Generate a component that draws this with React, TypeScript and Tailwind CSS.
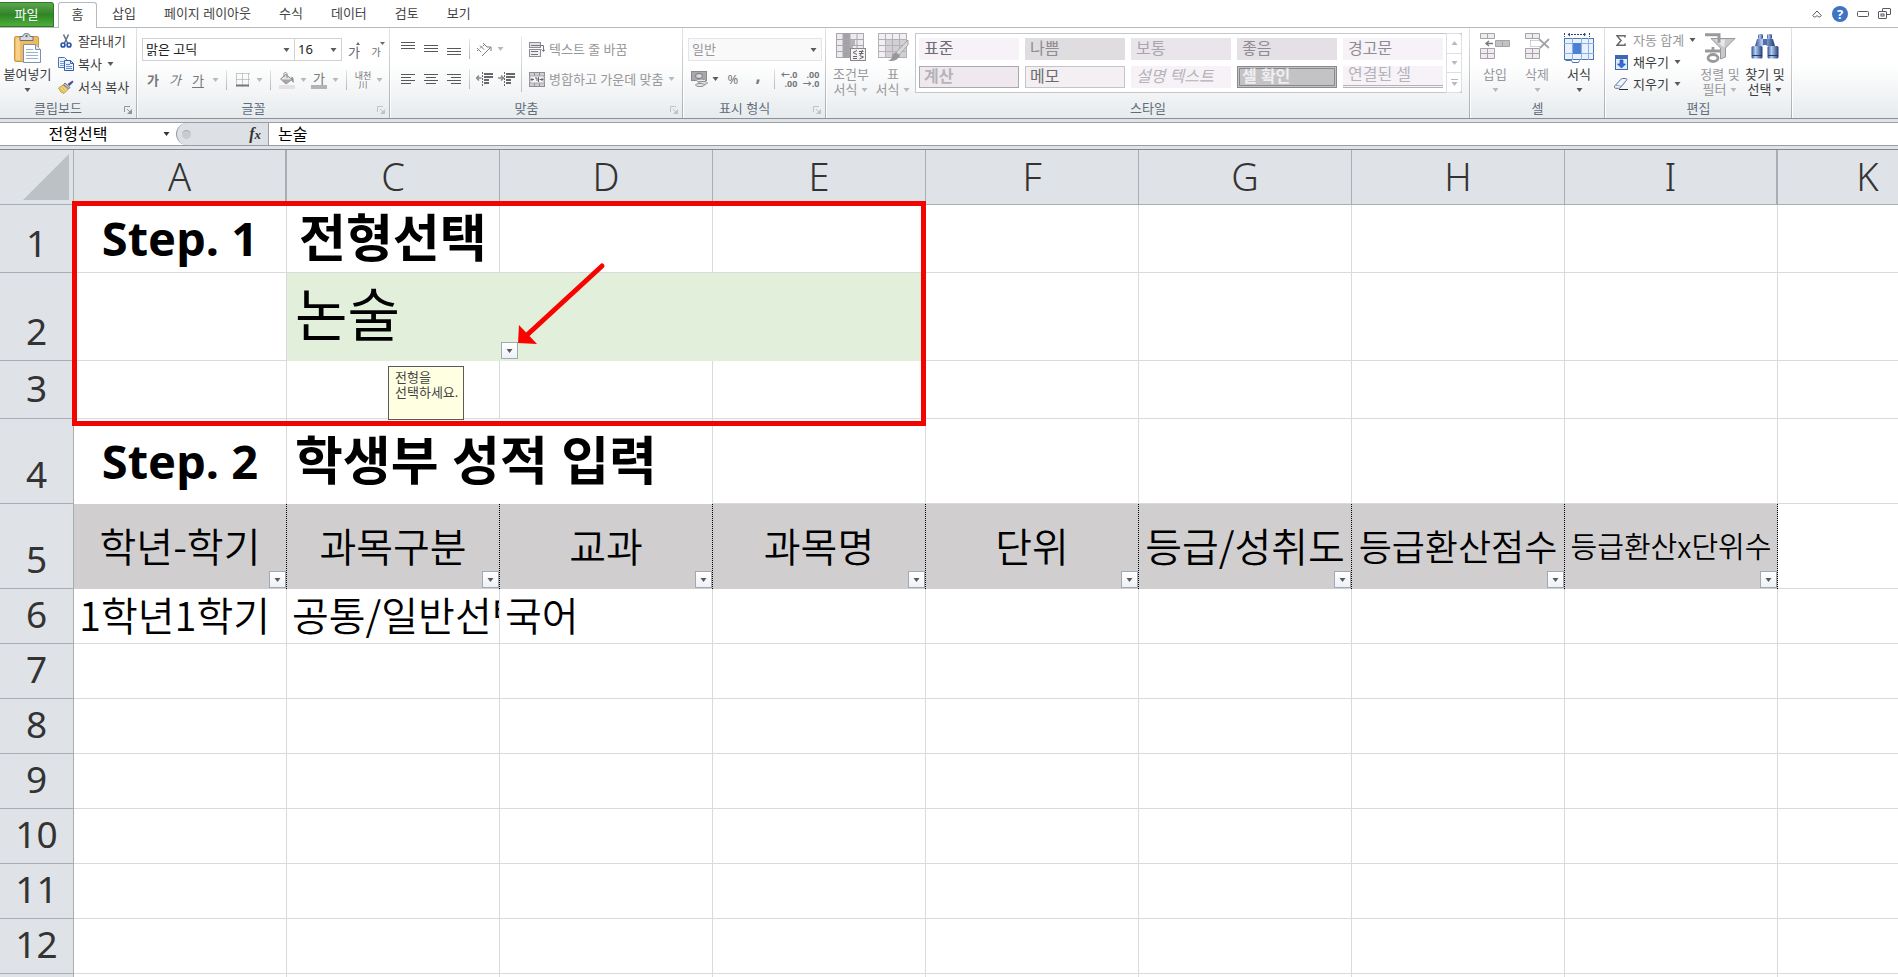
import React from "react";

type Kids = { children?: React.ReactNode };

/* ---------- small shared parts ---------- */

function Caret({ className = "text-[#5a5a5a]" }: { className?: string }) {
  return (
    <svg width="7" height="4" viewBox="0 0 7 4" className={`shrink-0 ${className}`} aria-hidden="true">
      <path d="M0.500 0h6L3.500 4z" fill="currentColor" />
    </svg>
  );
}

const pale = "text-[#b9b9bd]";

function CaretSlot({ dark = false }: { dark?: boolean }) {
  return (
    <span className="flex w-[10px] shrink-0 justify-center">
      <Caret className={dark ? "text-[#5a5a5a]" : pale} />
    </span>
  );
}

function Sep({ className = "w-3" }: { className?: string }) {
  return (
    <span className={`flex shrink-0 justify-center ${className}`}>
      <span className="h-5 w-px bg-linear-to-b from-[#e6e6e8] to-[#b4b6ba]" />
    </span>
  );
}

function Tool({ label, className = "w-[22px]", children }: Kids & { label: string; className?: string }) {
  return (
    <button type="button" aria-label={label} className={`flex h-[22px] shrink-0 items-center justify-center ${className}`}>
      {children}
    </button>
  );
}

function Launcher({ faint = false }: { faint?: boolean }) {
  return (
    <svg width="8" height="8" viewBox="0 0 8 8" className={faint ? "text-[#bfc3c8]" : "text-[#8e949b]"} aria-hidden="true">
      <path d="M0.500 6V0.500H6" fill="none" stroke="currentColor" />
      <path d="M3 3l3 3" stroke="currentColor" />
      <path d="M8 3v5H3z" fill="currentColor" />
    </svg>
  );
}

function Group({
  title,
  className,
  launcher,
  children,
}: Kids & { title: string; className: string; launcher?: "dark" | "faint" }) {
  return (
    <section aria-label={title} className={`flex h-[90px] shrink-0 ${className}`}>
      <div className="flex min-w-0 flex-1 flex-col">
        <div className="flex h-[70px] items-start">{children}</div>
        <div className="flex h-5 items-center">
          <span className="flex-1 text-center text-[13px] leading-5 text-[#626d7b]">{title}</span>
          {launcher && (
            <span className="w-5 pt-1 pl-2">
              <Launcher faint={launcher === "faint"} />
            </span>
          )}
        </div>
      </div>
      <span className="w-px bg-linear-to-b from-[#e2e4e6] via-[#c3c6ca] to-[#a9adb2]" />
      <span className="w-px bg-white" />
    </section>
  );
}

function BigButton({
  icon,
  lines,
  active = false,
  inlineCaret = false,
  className = "w-[42px]",
}: {
  icon: React.ReactNode;
  lines: string[];
  active?: boolean;
  inlineCaret?: boolean;
  className?: string;
}) {
  const last = lines.length - 1;
  return (
    <button
      type="button"
      className={`flex shrink-0 flex-col items-center pt-1 text-[13px] leading-[15px] ${className} ${
        active ? "text-[#3c3c3c]" : "text-[#98989c]"
      }`}
    >
      <span className="flex h-[35px] items-start justify-center pt-px">{icon}</span>
      {lines.map((line, i) => (
        <span key={line} className="flex items-center gap-1 whitespace-nowrap">
          {line}
          {inlineCaret && i === last && <Caret className={active ? "text-[#5a5a5a]" : pale} />}
        </span>
      ))}
      {!inlineCaret && (
        <span className="flex h-[15px] items-center">
          <Caret className={active ? "text-[#5a5a5a]" : pale} />
        </span>
      )}
    </button>
  );
}

function RowButton({
  icon,
  label,
  caret = false,
  muted = false,
  className = "h-[23px]",
}: {
  icon: React.ReactNode;
  label: string;
  caret?: boolean;
  muted?: boolean;
  className?: string;
}) {
  return (
    <button
      type="button"
      className={`flex items-center whitespace-nowrap text-[13px] leading-5 ${className} ${
        muted ? "text-[#98989c]" : "text-[#3c3c3c]"
      }`}
    >
      <span className="mr-1 flex w-4 justify-center">{icon}</span>
      {label}
      {caret && <Caret className="ml-[5px] text-[#5a5a5a]" />}
    </button>
  );
}

/* ---------- icons ---------- */

function PasteIcon() {
  return (
    <svg width="28" height="31" viewBox="0 0 28 31" aria-hidden="true">
      <rect x="0.500" y="3.500" width="24" height="25" rx="1.500" fill="#eebb62" stroke="#c99845" />
      <rect x="2" y="5" width="4" height="22" fill="#f6d08c" />
      <path d="M6 3.500h3c0-2 1.500-3 3.500-3s3.500 1 3.500 3h3v4H6z" fill="#d7dade" stroke="#6c737b" />
      <circle cx="12.500" cy="3" r="1.200" fill="#6c737b" />
      <path d="M9.500 11.500h12l5 5v13h-17z" fill="#fbfdff" stroke="#7f8fa6" />
      <path d="M21.500 11.500v5h5" fill="#dfe8f3" stroke="#7f8fa6" />
      <path d="M12 16.500h7M12 19.500h12M12 22.500h12M12 25.500h12" stroke="#9db0c8" />
    </svg>
  );
}

function CutIcon() {
  return (
    <svg width="12" height="14" viewBox="0 0 12 14" aria-hidden="true">
      <path d="M3.500 0.500l4 8.500M8.500 0.500l-4 8.500" stroke="#5d6f8a" strokeWidth="1.500" fill="none" />
      <ellipse cx="3" cy="11" rx="1.900" ry="2" fill="none" stroke="#2a55ad" strokeWidth="1.700" />
      <ellipse cx="9" cy="11" rx="1.900" ry="2" fill="none" stroke="#2a55ad" strokeWidth="1.700" />
    </svg>
  );
}

function CopyIcon() {
  return (
    <svg width="16" height="14" viewBox="0 0 16 14" aria-hidden="true">
      <path d="M0.500 0.500h6l3 3v7h-9z" fill="#eaf2fd" stroke="#4d74b5" />
      <path d="M2 4.500h4M2 6.500h5M2 8.500h5" stroke="#7fa0d6" />
      <path d="M6.500 3.500h6l3 3v7h-9z" fill="#eaf2fd" stroke="#365fa8" />
      <path d="M12.500 3.500v3h3" fill="none" stroke="#365fa8" />
      <path d="M8 7.500h4M8 9.500h6M8 11.500h6" stroke="#6b90cd" />
    </svg>
  );
}

function BrushIcon() {
  return (
    <svg width="16" height="14" viewBox="0 0 16 14" aria-hidden="true">
      <path d="M14.500 0.500l1 1.500-4 4-2-2z" fill="#4b4f8e" />
      <path d="M7 3l5 4.500-1.500 1.500L5.500 4.500z" fill="#b9bdc6" stroke="#5b5f70" strokeWidth="0.800" />
      <path d="M5 5l5 4.500-4 4L3 12 0.500 8z" fill="#f4d775" stroke="#a8893a" strokeWidth="0.800" />
      <path d="M2 8.500l4 4M4 7l3 4" stroke="#c9a748" strokeWidth="0.800" />
    </svg>
  );
}

function BorderIcon() {
  return (
    <svg width="14" height="14" viewBox="0 0 14 14" aria-hidden="true">
      <path
        d="M0.500 0.500h13M0.500 6.500h13M0.500 0.500v13M6.500 0.500v13M12.500 0.500v13"
        stroke="#9b9b9f"
        strokeDasharray="1 1"
        fill="none"
      />
      <path d="M0 12.500h13" stroke="#77777b" strokeWidth="2" />
    </svg>
  );
}

function FillIcon() {
  return (
    <svg width="16" height="17" viewBox="0 0 16 17" aria-hidden="true">
      <path d="M7 2.500l6 5-6 4.500-5.500-5z" fill="#e6e4e8" stroke="#8c8b90" />
      <path d="M5 5V2c0-2 3-2 3 0v4" fill="none" stroke="#8c8b90" />
      <path d="M2 7.500h10.500L7 11.500z" fill="#a5a4a9" />
      <path d="M12.500 4.500c2 .5 2.500 3 2 6.500-1.500-1-2.500-3-2-6.500z" fill="#8c8b90" />
      <rect y="13" width="16" height="4" fill="#e6dfe3" />
    </svg>
  );
}

function Lines({ widths, x = "left" }: { widths: number[]; x?: "left" | "center" | "right" }) {
  return (
    <svg
      width="14"
      height={widths.length * 3 - 1}
      viewBox={`0 0 14 ${widths.length * 3 - 1}`}
      shapeRendering="crispEdges"
      aria-hidden="true"
    >
      {widths.map((w, i) => (
        <rect
          key={i}
          x={x === "left" ? 0 : x === "center" ? (14 - w) / 2 : 14 - w}
          y={i * 3}
          width={w}
          height="1"
          fill="#58585c"
        />
      ))}
    </svg>
  );
}

function OrientationIcon() {
  return (
    <svg width="16" height="15" viewBox="0 0 16 15" aria-hidden="true" fill="none" stroke="#7c7c80">
      <path d="M1 6l4 4M1 9l2-2M4 3.500l4 4M4 6.500l2-2M7 1l4 4M7 4l2-2" />
      <path d="M6 14l8.500-8.500M11 5h4v4" />
    </svg>
  );
}

function IndentIcon({ inward }: { inward?: boolean }) {
  return (
    <svg width="17" height="14" viewBox="0 0 17 14" aria-hidden="true">
      <path d="M8 2h9M8 5h9M8 8h5M8 11h5" stroke="#68686c" strokeWidth="2" />
      <path d="M6.500 0v14" stroke="#68686c" strokeDasharray="2 1" />
      <path
        d={inward ? "M0 6h5M3 3.500L5.500 6 3 8.500" : "M0.500 6h5M3 3.500L0.500 6 3 8.500"}
        stroke="#8a8a8e"
        fill="none"
        strokeWidth="1.500"
      />
    </svg>
  );
}

function WrapIcon() {
  return (
    <svg width="16" height="15" viewBox="0 0 16 15" aria-hidden="true">
      <rect x="0.500" y="0.500" width="11" height="5" fill="#e4e0e6" stroke="#8f8e94" />
      <rect x="0.500" y="7.500" width="11" height="7" fill="#f1eef3" stroke="#8f8e94" />
      <path d="M2 3.500h9M2 9.500h7M2 12.500h7" stroke="#77767b" />
      <path d="M11 3.500h3.500V9M12.500 7.500l2 2 1.500-2" fill="none" stroke="#77767b" />
    </svg>
  );
}

function MergeIcon() {
  return (
    <svg width="16" height="15" viewBox="0 0 16 15" aria-hidden="true">
      <rect x="0.500" y="0.500" width="15" height="14" fill="#d0cdd2" stroke="#8f8e94" />
      <path d="M5.500 0v4M10.500 0v4M5.500 11v4M10.500 11v4" stroke="#8f8e94" />
      <rect x="1" y="4" width="14" height="7" fill="#f6f4f7" stroke="#a9a8ad" />
      <path
        d="M2 7.500h3M11 7.500h3M3.500 6L2 7.500 3.500 9M12.500 6L14 7.500 12.500 9M6 6h2v3M9.500 5v5M9.500 7.500h1"
        fill="none"
        stroke="#66656a"
      />
    </svg>
  );
}

function MoneyIcon() {
  return (
    <svg width="17" height="16" viewBox="0 0 17 16" aria-hidden="true">
      <rect x="0.500" y="0.500" width="15" height="9" fill="#a9a7ab" stroke="#8b898d" />
      <ellipse cx="8" cy="5" rx="3.500" ry="2.500" fill="#d9d7db" stroke="#77767a" />
      <ellipse cx="10" cy="9.500" rx="4.500" ry="1.500" fill="#ecebee" stroke="#8b898d" />
      <ellipse cx="12" cy="12" rx="4.500" ry="1.500" fill="#ecebee" stroke="#8b898d" />
      <ellipse cx="9" cy="14" rx="4.500" ry="1.500" fill="#ecebee" stroke="#8b898d" />
    </svg>
  );
}

function CondFormatIcon() {
  return (
    <svg width="30" height="29" viewBox="0 0 30 29" aria-hidden="true">
      <rect x="0.500" y="0.500" width="27" height="24" fill="#efe9f0" stroke="#a9a8ac" />
      <rect x="7" y="0" width="7" height="25" fill="#a3a2a6" />
      <path d="M14 7h5v5h-5zM14 13h3v5h-3z" fill="#b5b3b8" />
      <path d="M0 6.500h28M0 12.500h28M0 18.500h28M7 0v25M14 0v25M21 0v25" stroke="#a9a8ac" fill="none" />
      <rect x="14.500" y="15.500" width="15" height="12" fill="#f4f2f5" stroke="#88878b" />
      <path
        d="M21 17.500l-4 2 4 2M17 23.500h4M17 25.500h4M23 18.500h4.500M23 20.500h4.500M26.500 17l-2 5M23.500 22.500l4 1.500-4 2"
        stroke="#66656a"
        fill="none"
      />
    </svg>
  );
}

function TableFormatIcon() {
  return (
    <svg width="31" height="29" viewBox="0 0 31 29" aria-hidden="true">
      <rect x="0.500" y="0.500" width="28" height="24" fill="#f3eef4" stroke="#b3b1b6" />
      <rect x="7" y="6" width="21" height="18" fill="#d2d0d4" />
      <path d="M0 6.500h29M0 12.500h29M0 18.500h29M7.500 0v25M14.500 0v25M21.500 0v25" stroke="#b3b1b6" fill="none" />
      <path d="M30 7v5l-9 10-3-2.500z" fill="#d9d8db" stroke="#98979b" strokeWidth="0.800" />
      <path d="M18 19.500l3.500 3c-1 4-5 6-11.500 5.500 3-1 4-3 4.500-5.500 .5-2 2-3 3.500-3z" fill="#98979b" />
    </svg>
  );
}

function InsertIcon() {
  return (
    <svg width="31" height="27" viewBox="0 0 31 27" aria-hidden="true">
      <path
        d="M0.500 0.500h14v5H0.500zM7.500 0.500v5M0.500 15.500h14v10H0.500zM7.500 15.500v10M0.500 20.500h14"
        fill="#f1ebf1"
        stroke="#a5a4a8"
      />
      <path d="M15.500 7.500h14v6h-14z" fill="#c2c1c4" stroke="#a5a4a8" />
      <path d="M22.500 7.500v6" stroke="#a5a4a8" />
      <path d="M6 10.500h7M9 8l-3 2.500L9 13" stroke="#77767a" fill="none" strokeWidth="1.400" />
    </svg>
  );
}

function DeleteIcon() {
  return (
    <svg width="31" height="27" viewBox="0 0 31 27" aria-hidden="true">
      <path
        d="M3.500 0.500h14v5h-14zM10.500 0.500v5M3.500 15.500h14v10h-14zM10.500 15.500v10M3.500 20.500h14"
        fill="#f1ebf1"
        stroke="#a5a4a8"
      />
      <path d="M8.500 7.500h10M8.500 13.500h10M8.500 7.500v6" stroke="#a5a4a8" strokeDasharray="1 1" fill="none" />
      <path d="M17 6l10 9M27 6l-9 9" stroke="#a5a4a8" strokeWidth="1.800" />
    </svg>
  );
}

function FormatIcon() {
  return (
    <svg width="31" height="30" viewBox="0 0 31 30" aria-hidden="true">
      <path
        d="M0.500 0v4M25.500 0v4M4 1.500h18M6 0L4 1.500 6 3M20 0l2 1.500L20 3"
        stroke="#23426f"
        fill="none"
        strokeDasharray="2 1"
      />
      <rect x="0.500" y="5.500" width="29" height="21" fill="#e9f1fc" stroke="#4c76b5" />
      <path d="M0 10.500h30M0 20.500h30M8.500 5v22M17.500 5v22M24.500 5v22" stroke="#8fafdd" fill="none" />
      <rect x="9" y="10" width="8" height="11" fill="#4f80d8" />
      <path d="M1.500 27.500h6l1 2h6l1-2" stroke="#4c76b5" fill="none" />
    </svg>
  );
}

function FillDownIcon() {
  return (
    <svg width="13" height="15" viewBox="0 0 13 15" aria-hidden="true">
      <rect x="0.500" y="0.500" width="12" height="14" fill="#dfeafb" stroke="#3f68b4" />
      <rect x="1" y="1" width="11" height="3" fill="#3f68b4" />
      <path d="M5 5h3v4h2.500L6.500 13 2.500 9H5z" fill="#2f6fe0" stroke="#1b4ba5" strokeWidth="0.700" />
    </svg>
  );
}

function EraserIcon() {
  return (
    <svg width="15" height="12" viewBox="0 0 15 12" aria-hidden="true">
      <path
        d="M0.700 8l6-6.500c.6-.7 1.300-1 2-1h3c1 0 1.500 1 .8 1.800L6.500 9.500c-.5.500-1 .8-1.800.8H1.800C.7 10.300 0 9 .7 8z"
        fill="#f2f6fc"
        stroke="#5a6c8c"
      />
      <path d="M1 7.500h4.500l1 1.500 5-6" stroke="#8ea5cc" fill="none" />
      <path d="M5 11.500h9" stroke="#2a2a2a" />
    </svg>
  );
}

function SortFilterIcon() {
  return (
    <svg width="31" height="30" viewBox="0 0 31 30" aria-hidden="true">
      <path d="M6 5.500h24L20.500 15v9l-5 2V15z" fill="#c9c8cc" stroke="#99989c" />
      <path d="M10 6.500h10l-1 8z" fill="#e9e8eb" />
      <path d="M0 1.800h14v8" stroke="#99989c" strokeWidth="3" fill="none" />
      <path d="M0 18h16M8 14v4" stroke="#99989c" strokeWidth="2.800" fill="none" />
      <ellipse cx="8" cy="25" rx="5" ry="3.500" stroke="#99989c" strokeWidth="2.800" fill="none" />
    </svg>
  );
}

function BinocularsIcon() {
  return (
    <svg width="28" height="27" viewBox="0 0 28 27" aria-hidden="true">
      <defs>
        <linearGradient id="lens" x1="0" x2="1">
          <stop offset="0" stopColor="#2e4f8c" />
          <stop offset="0.350" stopColor="#b9d0f3" />
          <stop offset="1" stopColor="#1f3c74" />
        </linearGradient>
      </defs>
      <rect x="7" y="1" width="5" height="5" rx="1.500" fill="url(#lens)" />
      <rect x="16" y="1" width="5" height="5" rx="1.500" fill="url(#lens)" />
      <path d="M4 13l2-7h6.500v7zM15.500 13V6H22l2 7z" fill="url(#lens)" />
      <rect x="12" y="6" width="4" height="6" fill="#4c6fae" />
      <rect x="0.500" y="13" width="11" height="12.500" rx="1.500" fill="url(#lens)" />
      <rect x="16.500" y="13" width="11" height="12.500" rx="1.500" fill="url(#lens)" />
      <path d="M1 22.500h10M17 22.500h10" stroke="#1f3c74" />
    </svg>
  );
}

/* ---------- ribbon ---------- */

const tabs = ["삽입", "페이지 레이아웃", "수식", "데이터", "검토", "보기"];

function TabBar() {
  return (
    <nav className="flex h-7 shrink-0 items-stretch text-[13px] text-[#444444]">
      <div className="flex w-[58px] border-b border-[#b6babd] pt-[2px]">
        <button
          type="button"
          className="w-[54px] rounded-tr-[3px] border border-l-0 border-[#2c7a26] bg-linear-to-b from-[#5da64f] via-[#2f8526] to-[#4fae3a] text-white"
        >
          파일
        </button>
      </div>
      <button type="button" className="mt-[2px] w-[39px] rounded-t-[3px] border border-b-0 border-[#b6babd] bg-white pb-[2px]">
        홈
      </button>
      <div className="flex flex-1 items-center gap-[28px] border-b border-[#b6babd] pl-[15px]">
        {tabs.map((t) => (
          <button key={t} type="button">
            {t}
          </button>
        ))}
        <div className="ml-auto flex items-center gap-[9px] pr-[7px]">
          <button type="button" aria-label="리본 메뉴 최소화" className="mr-px">
            <svg width="10" height="8" viewBox="0 0 10 8" fill="#fff" stroke="#555a60" aria-hidden="true">
              <path d="M0.700 5.500L5 1l4.300 4.500-1.500 1.500H6.500L5 5.500 3.500 7H2.200z" />
            </svg>
          </button>
          <button
            type="button"
            className="flex h-4 w-4 items-center justify-center rounded-full bg-[#3f73c4] text-[13px] leading-4 font-bold text-white"
          >
            ?
          </button>
          <button type="button" aria-label="최소화">
            <svg width="12" height="6" viewBox="0 0 12 6" aria-hidden="true">
              <rect x="0.500" y="0.500" width="11" height="5" rx="1" fill="#fff" stroke="#555a60" />
            </svg>
          </button>
          <button type="button" aria-label="이전 크기로 복원">
            <svg width="13" height="11" viewBox="0 0 13 11" fill="#fff" stroke="#555a60" aria-hidden="true">
              <rect x="4.500" y="0.500" width="8" height="6" rx="0.500" />
              <rect x="0.500" y="3.500" width="8" height="7" rx="0.500" />
              <rect x="3" y="6" width="3" height="2" />
            </svg>
          </button>
        </div>
      </div>
    </nav>
  );
}

function Combo({ label, value, className, faint = false }: { label: string; value: string; className: string; faint?: boolean }) {
  return (
    <label className={`relative flex h-[23px] shrink-0 items-center border ${className}`}>
      <select
        aria-label={label}
        className={`h-full w-full appearance-none bg-transparent pb-px pl-[3px] text-[13px] leading-5 outline-none ${
          faint ? "text-[#98989c]" : "text-[#222222]"
        }`}
      >
        <option>{value}</option>
      </select>
      <span className="pointer-events-none absolute right-1">
        <Caret />
      </span>
    </label>
  );
}

type StyleItem = { name: string; look: string };

const cellStyles: StyleItem[] = [
  { name: "표준", look: "pl-[5px] bg-[#f6f2f8] text-[#6c6c70]" },
  { name: "나쁨", look: "pl-[5px] bg-[#e0dde1] text-[#8d8c90]" },
  { name: "보통", look: "pl-[5px] bg-[#e9e5eb] text-[#a8a6aa]" },
  { name: "좋음", look: "pl-[5px] bg-[#e4e0e5] text-[#8d8c90]" },
  { name: "경고문", look: "pl-[5px] bg-[#f6f2f8] text-[#8d8c90]" },
  { name: "계산", look: "pl-1 border border-[#a9a8ab] bg-[#efe9ef] font-bold text-[#b5b3b7]" },
  { name: "메모", look: "pl-1 border border-[#c5c4c7] bg-[#f3eff3] text-[#6c6c70]" },
  { name: "설명 텍스트", look: "pl-[5px] bg-[#f6f2f8] italic text-[#b5b3b7]" },
  { name: "셀 확인", look: "pl-[2px] border-[3px] border-double border-[#8a8a8d] bg-[#c3c2c5] font-bold text-[#f0eef1]" },
  { name: "연결된 셀", look: "pl-[5px] border-b-[3px] border-double border-[#b5b3b7] bg-[#f6f2f8] text-[#b5b3b7]" },
];

function StyleGallery() {
  return (
    <div className="mt-[5px] ml-px flex h-[60px] border border-[#c5c8cb] bg-white">
      <div className="grid grid-cols-5 content-start gap-[6px] px-[3px] pt-1">
        {cellStyles.map((s) => (
          <button
            key={s.name}
            type="button"
            className={`flex h-[22px] w-[100px] items-center whitespace-nowrap pb-[3px] text-[16px] leading-5 ${s.look}`}
          >
            {s.name}
          </button>
        ))}
      </div>
      <div className="-my-px -mr-px flex w-4 flex-col divide-y divide-[#dedfe2] rounded-r-[3px] border border-[#dedfe2] text-[#b9b9bd]">
        <button type="button" aria-label="위로" className="flex flex-1 items-center justify-center">
          <svg width="7" height="4" viewBox="0 0 7 4" aria-hidden="true">
            <path d="M0.500 4h6L3.500 0z" fill="currentColor" />
          </svg>
        </button>
        <button type="button" aria-label="아래로" className="flex flex-1 items-center justify-center">
          <Caret className={pale} />
        </button>
        <button type="button" aria-label="자세히" className="flex flex-1 flex-col items-center justify-center gap-[2px]">
          <span className="h-px w-[7px] bg-[#b9b9bd]" />
          <Caret className={pale} />
        </button>
      </div>
    </div>
  );
}

function Decimals({ top, bottom }: { top: string; bottom: string }) {
  return (
    <span className="flex flex-col items-end text-[9px] leading-[9px] font-bold">
      <span>{top}</span>
      <span>{bottom}</span>
    </span>
  );
}

function Ribbon() {
  return (
    <div className="flex shrink-0 overflow-hidden border-b border-[#8b9096] bg-linear-to-b from-white from-40% to-[#e7ebed]">
      <Group title="클립보드" launcher="dark" className="w-[138px]">
        <BigButton className="w-[55px]" icon={<PasteIcon />} lines={["붙여넣기"]} active />
        <div className="flex flex-col items-start pt-px pl-[3px]">
          <RowButton icon={<CutIcon />} label="잘라내기" />
          <RowButton icon={<CopyIcon />} label="복사" caret />
          <RowButton icon={<BrushIcon />} label="서식 복사" />
        </div>
      </Group>

      <Group title="글꼴" launcher="faint" className="w-[253px]">
        <div className="flex flex-col pt-[10px] pl-1">
          <div className="flex items-center">
            <Combo label="글꼴" value="맑은 고딕" className="w-[153px] border-[#cfd1d4] bg-white" />
            <Combo label="글꼴 크기" value="16" className="-ml-px w-[48px] border-[#cfd1d4] bg-white" />
            <Tool label="글꼴 크기 크게" className="w-6">
              <span className="pt-1 text-[13px] leading-4 text-[#68686c]">가</span>
              <svg width="4" height="3" className="-ml-1 mb-3" aria-hidden="true">
                <path d="M0 3l2-3 2 3z" fill="#68686c" />
              </svg>
            </Tool>
            <Tool label="글꼴 크기 작게" className="w-6">
              <span className="pt-1 text-[10px] leading-4 text-[#68686c]">가</span>
              <svg width="5" height="3" className="-ml-px mb-3" aria-hidden="true">
                <path d="M0 0l2.500 3L5 0z" fill="#68686c" />
              </svg>
            </Tool>
          </div>
          <div className="mt-2 flex items-center text-[13px] leading-4 text-[#77777b]">
            <Tool label="굵게">
              <b>가</b>
            </Tool>
            <Tool label="기울임꼴">
              <i>가</i>
            </Tool>
            <Tool label="밑줄" className="w-6">
              <span className="border-b border-[#77777b] leading-[14px]">가</span>
            </Tool>
            <CaretSlot />
            <Sep />
            <Tool label="테두리">
              <BorderIcon />
            </Tool>
            <CaretSlot />
            <Sep />
            <Tool label="채우기 색">
              <FillIcon />
            </Tool>
            <CaretSlot />
            <Tool label="글꼴 색">
              <span className="border-b-4 border-[#b3b2b5] px-[2px] leading-[13px]">가</span>
            </Tool>
            <CaretSlot />
            <Sep />
            <Tool label="윗주">
              <span className="flex flex-col items-center text-[9px] leading-[9px]">
                <span>내천</span>
                <span>川</span>
              </span>
            </Tool>
            <CaretSlot />
          </div>
        </div>
      </Group>

      <Group title="맞춤" launcher="faint" className="w-[293px]">
        <div className="flex flex-col pt-[10px] pl-[5px]">
          <div className="flex items-center">
            <Tool label="위쪽 맞춤" className="w-[23px] pb-[6px]">
              <Lines widths={[14, 14, 14]} x="center" />
            </Tool>
            <Tool label="가운데 맞춤" className="w-[23px]">
              <Lines widths={[14, 14, 14]} x="center" />
            </Tool>
            <Tool label="아래쪽 맞춤" className="w-[23px] pt-[6px]">
              <Lines widths={[14, 14, 14]} x="center" />
            </Tool>
            <Sep className="w-2" />
            <Tool label="방향">
              <OrientationIcon />
            </Tool>
            <CaretSlot />
          </div>
          <div className="mt-2 flex items-center">
            <Tool label="왼쪽 맞춤" className="w-[23px]">
              <Lines widths={[14, 10, 14, 10]} />
            </Tool>
            <Tool label="가로 가운데 맞춤" className="w-[23px]">
              <Lines widths={[14, 10, 14, 10]} x="center" />
            </Tool>
            <Tool label="오른쪽 맞춤" className="w-[23px]">
              <Lines widths={[14, 10, 14, 10]} x="right" />
            </Tool>
            <Sep className="w-2" />
            <Tool label="내어쓰기">
              <IndentIcon />
            </Tool>
            <Tool label="들여쓰기">
              <IndentIcon inward />
            </Tool>
          </div>
        </div>
        <span className="mt-2 ml-1 h-14 w-px bg-linear-to-b from-[#ececee] to-[#bcbec2]" />
        <div className="flex flex-col items-start pt-[10px] pl-[7px]">
          <RowButton icon={<WrapIcon />} label="텍스트 줄 바꿈" muted className="h-[22px]" />
          <span className="mt-2 flex items-center">
            <RowButton icon={<MergeIcon />} label="병합하고 가운데 맞춤" muted className="h-[22px]" />
            <span className="pl-[3px]">
              <CaretSlot />
            </span>
          </span>
        </div>
      </Group>

      <Group title="표시 형식" launcher="faint" className="w-[143px]">
        <div className="flex flex-col pt-[10px] pl-1">
          <Combo label="표시 형식" value="일반" faint className="w-[134px] border-[#e3e5ea] bg-[#f9f9fa]" />
          <div className="mt-[7px] flex items-center text-[13px] leading-4 text-[#77777b]">
            <Tool label="회계 표시 형식">
              <MoneyIcon />
            </Tool>
            <CaretSlot dark />
            <Tool label="백분율 스타일" className="w-[26px]">
              %
            </Tool>
            <Tool label="쉼표 스타일" className="w-6">
              <b className="pb-2 text-[18px]">,</b>
            </Tool>
            <Sep className="w-2" />
            <Tool label="자릿수 늘림">
              <Decimals top="←.0" bottom=".00" />
            </Tool>
            <Tool label="자릿수 줄임">
              <Decimals top=".00" bottom="→.0" />
            </Tool>
          </div>
        </div>
      </Group>

      <Group title="스타일" className="w-[644px]">
        <span className="w-[3px]" />
        <BigButton icon={<CondFormatIcon />} lines={["조건부", "서식"]} inlineCaret />
        <BigButton icon={<TableFormatIcon />} lines={["표", "서식"]} inlineCaret />
        <StyleGallery />
      </Group>

      <Group title="셀" className="w-[135px]">
        <span className="w-[3px]" />
        <BigButton icon={<InsertIcon />} lines={["삽입"]} />
        <BigButton icon={<DeleteIcon />} lines={["삭제"]} />
        <BigButton icon={<FormatIcon />} lines={["서식"]} active />
      </Group>

      <Group title="편집" className="w-[187px]">
        <div className="flex w-[92px] flex-col items-start pt-px pl-[7px]">
          <RowButton
            icon={
              <svg width="10" height="11" viewBox="0 0 10 11" aria-hidden="true">
                <path d="M9 2.500V0.700H1L5 5.500l-4 4.800h8V8.500" fill="none" stroke="#68686c" strokeWidth="1.500" />
              </svg>
            }
            label="자동 합계"
            caret
            muted
            className="h-[22px]"
          />
          <RowButton icon={<FillDownIcon />} label="채우기" caret className="h-[22px]" />
          <RowButton icon={<EraserIcon />} label="지우기" caret className="h-[22px]" />
        </div>
        <BigButton icon={<SortFilterIcon />} lines={["정렬 및", "필터"]} inlineCaret className="w-11" />
        <BigButton icon={<BinocularsIcon />} lines={["찾기 및", "선택"]} inlineCaret active className="w-[46px]" />
      </Group>
    </div>
  );
}

/* ---------- formula bar ---------- */

function FormulaBar() {
  return (
    <div className="flex h-[31px] shrink-0 flex-col border-b border-[#85898f] bg-[#dfe2e7] pt-[3px]">
      <div className="flex h-6 border-y border-[#9a9da3] bg-white text-[16px] text-black">
        <div className="flex w-[176px] items-center">
          <input
            aria-label="이름 상자"
            defaultValue="전형선택"
            className="h-full w-[156px] bg-transparent pb-[2px] text-center leading-5 outline-none"
          />
          <button type="button" aria-label="이름 목록" className="ml-[7px]">
            <Caret className="text-[#333333]" />
          </button>
        </div>
        <div className="flex w-[93px] items-center justify-between rounded-l-full border-r border-l border-[#9a9da3] bg-[#dde0e5] pr-[7px] pl-[5px]">
          <span className="h-[9px] w-[9px] rounded-full border-t border-[#a9adb2] bg-[#c8ccd1]" />
          <button
            type="button"
            className="font-['Liberation_Serif',serif] text-[16px] leading-5 font-bold text-[#333333] italic"
          >
            f<span className="text-[13px]">x</span>
          </button>
        </div>
        <input
          aria-label="수식 입력줄"
          defaultValue="논술"
          className="h-full min-w-0 flex-1 bg-white pb-[2px] pl-[9px] leading-5 outline-none"
        />
      </div>
    </div>
  );
}

/* ---------- worksheet ---------- */

const columns = [
  { name: "A", width: "w-[213px]" },
  { name: "C", width: "w-[213px]" },
  { name: "D", width: "w-[213px]" },
  { name: "E", width: "w-[213px]" },
  { name: "F", width: "w-[213px]" },
  { name: "G", width: "w-[213px]" },
  { name: "H", width: "w-[213px]" },
  { name: "I", width: "w-[213px]" },
  { name: "K", width: "w-[180px]" },
];
const headings = [
  { text: "학년-학기", size: "text-[40px]" },
  { text: "과목구분", size: "text-[40px]" },
  { text: "교과", size: "text-[40px]" },
  { text: "과목명", size: "text-[40px]" },
  { text: "단위", size: "text-[40px]" },
  { text: "등급/성취도", size: "text-[40px]" },
  { text: "등급환산점수", size: "text-[36px]" },
  { text: "등급환산x단위수", size: "text-[29px]" },
];
const emptyRows = [7, 8, 9, 10, 11, 12, 13];

function DropButton({ label }: { label: string }) {
  return (
    <button
      type="button"
      aria-label={label}
      className="flex h-[17px] w-[17px] items-center justify-center border border-[#a3a9b3] bg-linear-to-b from-white to-[#edf1f7]"
    >
      <Caret />
    </button>
  );
}

function RowHead({ n, middle = false }: { n: number; middle?: boolean }) {
  return (
    <th
      scope="row"
      className={`border-r border-b border-[#a9aeb4] bg-[#dfe2e7] p-0 font-['Noto_Sans',sans-serif] text-[37px] leading-[50px] font-normal text-[#333333] ${
        middle ? "pb-1 align-middle" : "pb-1 align-bottom"
      }`}
    >
      {n}
    </th>
  );
}

function Cells({ count }: { count: number }) {
  return (
    <>
      {Array.from({ length: count }, (_, i) => (
        <td key={i} className="border-r border-b border-[#d9dadb] p-0" />
      ))}
    </>
  );
}

function Sheet() {
  return (
    <main className="relative min-h-0 flex-1 overflow-hidden bg-white">
      <table className="w-[1958px] table-fixed border-separate border-spacing-0 text-black">
        <colgroup>
          <col className="w-[74px]" />
          {columns.map((c) => (
            <col key={c.name} className={c.width} />
          ))}
        </colgroup>
        <thead>
          <tr className="h-[55px]">
            <td className="border-r border-b border-[#a9aeb4] bg-[#dfe2e7] p-0">
              <svg width="46" height="46" viewBox="0 0 46 46" className="mr-1 ml-auto" aria-hidden="true">
                <path d="M46 0v46H0z" fill="#bcc1c5" />
              </svg>
            </td>
            {columns.map(({ name }) => (
              <th
                key={name}
                scope="col"
                className={`border-b border-[#a9aeb4] bg-[#dfe2e7] p-0 pb-[2px] text-[38px] leading-[50px] font-light text-[#333333] ${
                  name === "A" || name === "I" ? "border-r-2" : "border-r"
                }`}
              >
                {name}
              </th>
            ))}
          </tr>
        </thead>
        <tbody>
          <tr className="h-[68px]">
            <RowHead n={1} />
            <td className="border-r border-b border-[#d9dadb] p-0 pb-[2px] text-center text-[47px] leading-[60px] font-bold">
              Step. 1
            </td>
            <td className="border-r border-b border-[#d9dadb] p-0 pb-[3px] pl-3 text-[51px] leading-[60px] font-bold whitespace-nowrap">
              전형선택
            </td>
            <Cells count={7} />
          </tr>
          <tr className="h-[88px]">
            <RowHead n={2} />
            <Cells count={1} />
            <td colSpan={3} className="bg-[#e2efda] p-0 pb-[6px] pl-2 text-[57px] leading-[80px]">
              논술
            </td>
            <Cells count={5} />
          </tr>
          <tr className="h-[58px]">
            <RowHead n={3} middle />
            <Cells count={9} />
          </tr>
          <tr className="h-[85px]">
            <RowHead n={4} />
            <td className="border-r border-[#d9dadb] p-0 pb-[2px] text-center text-[47px] leading-[60px] font-bold">Step. 2</td>
            <td
              colSpan={2}
              className="border-r border-[#d9dadb] p-0 pb-1 pl-2 text-[52px] leading-[60px] font-bold whitespace-nowrap"
            >
              학생부 성적 입력
            </td>
            <Cells count={6} />
          </tr>
          <tr className="h-[85px] font-['Noto_Sans_CJK_KR',sans-serif]">
            <RowHead n={5} />
            {headings.map((h) => (
              <td
                key={h.text}
                className={`relative border-r border-dotted border-black bg-[#d0cecf] p-0 pb-1 text-center leading-[60px] font-[350] whitespace-nowrap ${h.size}`}
              >
                {h.text}
                <span className="absolute right-0 bottom-px">
                  <DropButton label={`${h.text} 필터`} />
                </span>
              </td>
            ))}
            <Cells count={1} />
          </tr>
          <tr className="h-[55px] font-['Noto_Sans_CJK_KR',sans-serif] text-[40px] leading-[50px] font-[350] whitespace-nowrap">
            <RowHead n={6} />
            {["1학년1학기", "공통/일반선택", "국어"].map((t) => (
              <td key={t} className="overflow-hidden border-r border-b border-[#d9dadb] p-0 pb-1 pl-[5px]">
                {t}
              </td>
            ))}
            <Cells count={6} />
          </tr>
          {emptyRows.map((n) => (
            <tr key={n} className="h-[55px]">
              <RowHead n={n} />
              <Cells count={9} />
            </tr>
          ))}
        </tbody>
      </table>

      {/* merged-cell list button, input message and callout marks float above the grid */}
      <div className="absolute top-[192px] left-[501px]">
        <DropButton label="전형 목록" />
      </div>
      <p className="absolute top-[216px] left-[388px] h-[54px] w-[76px] border border-[#5a5a5a] bg-[#ffffe1] pt-[3px] pl-[6px] text-[13px] leading-[15px] whitespace-nowrap text-[#444444]">
        전형을
        <br />
        선택하세요.
      </p>
      <div className="pointer-events-none absolute top-[51px] left-[72px] h-[225px] w-[854px] border-[5px] border-[#f20500]" />
      <svg className="pointer-events-none absolute top-[110px] left-[510px]" width="100" height="90" viewBox="0 0 100 90" aria-hidden="true">
        <path d="M92 6L17 75" stroke="#f80400" strokeWidth="5" strokeLinecap="round" />
        <path d="M9 65l-1 18 19 1z" fill="#f80400" />
      </svg>
    </main>
  );
}

export default function App() {
  return (
    <div className="flex h-screen flex-col overflow-hidden bg-white font-['Noto_Sans','Noto_Sans_CJK_KR',sans-serif]">
      <TabBar />
      <Ribbon />
      <FormulaBar />
      <Sheet />
    </div>
  );
}
